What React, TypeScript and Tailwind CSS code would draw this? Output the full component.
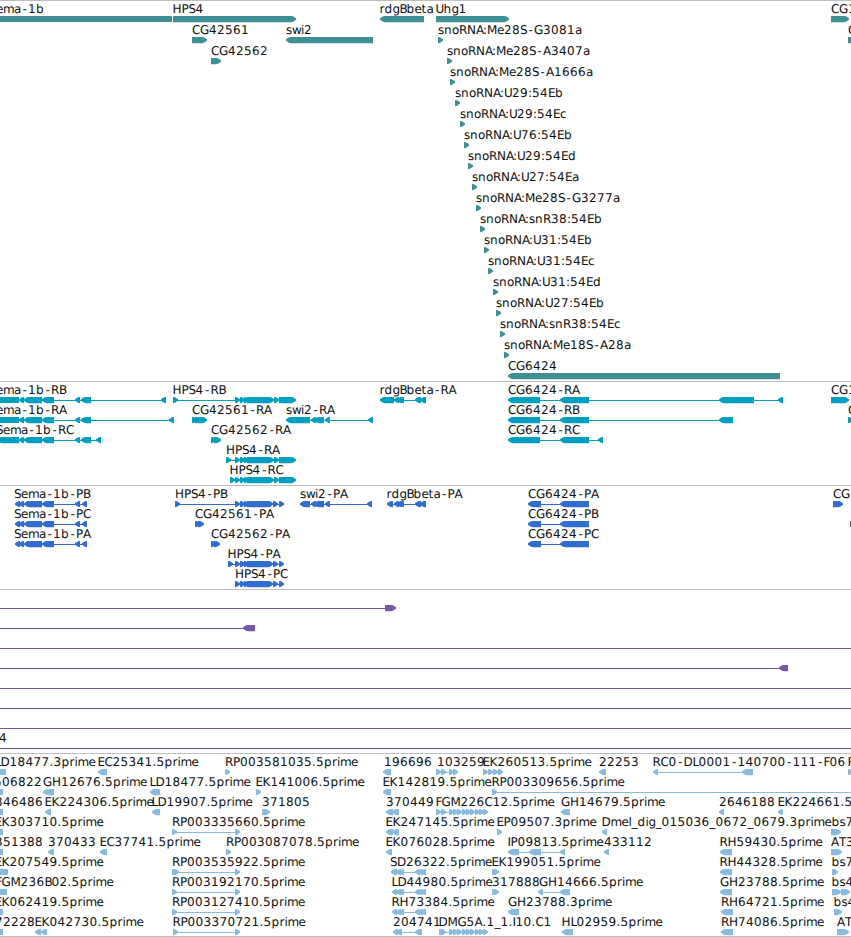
type Dir = "L" | "R" | "B";
/** start, end, direction (B is a plain block) */
type Seg = [number, number, Dir];
type Label = [number, string];
type Lane = { labels?: Label[]; segs?: Seg[]; lines?: [number, number][] };

const WIDTH = 851;

/** Advance of each character in a label, in pixels. */
const ADVANCE: Record<string, number> = {
  ".": 4, ":": 4, "-": 7, _: 6,
  A: 8, B: 7, C: 8, D: 9, E: 7, F: 6, G: 9, H: 9, I: 3, K: 8, L: 6, M: 10, N: 9, P: 7, R: 8, S: 7, T: 7, U: 8,
  a: 7, b: 8, c: 6, d: 8, e: 7, g: 7, h: 8, i: 3, l: 3, m: 11, n: 8, o: 7, p: 8, r: 5, s: 6, t: 5, w: 9,
};

function glyphPositions(x: number, text: string): string {
  let at = x;
  const out: number[] = [];
  let previous = "";
  for (const ch of text) {
    // the colon tucks in under an A, and hyphens are centred in their cell
    if (ch === ":" && previous === "A") at -= 1;
    out.push(ch === "-" ? at + 1.5 : at);
    at += ADVANCE[ch] ?? 8;
    previous = ch;
  }
  return out.join(" ");
}

const STEMS = "BDEFHIKLMNPRUbr";

function points([a, b, dir]: Seg): string {
  const t = Math.min(5, b - a);
  if (dir === "R") return `${a},14 ${b - t},14 ${b - t + 2},14.3 ${b},16.3 ${b},17.7 ${b - t + 2},19.8 ${b - t},20.3 ${a},20.3`;
  if (dir === "L") return `${b},14 ${a + t},14 ${a + t - 2},14.3 ${a},16.3 ${a},17.7 ${a + t - 2},19.8 ${a + t},20.3 ${b},20.3`;
  return `${a},14 ${b},14 ${b},20 ${a},20`;
}

function LaneRow({ lane, height }: { lane: Lane; height: number }) {
  return (
    <svg width={WIDTH} height={height} className="block shrink-0 overflow-visible">
      {lane.lines?.map(([a, b], i) => (
        <rect key={i} x={a} y={17} width={b - a} height={1} fill="currentColor" />
      ))}
      {lane.segs?.map((s, i) => (
        <polygon key={i} points={points(s)} fill="currentColor" />
      ))}
      {lane.labels?.map(([x, text], i) => (
        <text
          key={i}
          x={glyphPositions(x - (STEMS.includes(text[0]) ? 0.5 : 0), text)}
          y={11}
          className="fill-[#111111] font-['DejaVu_Sans',sans-serif] text-[12px] [text-rendering:geometricPrecision]"
        >
          {text}
        </text>
      ))}
    </svg>
  );
}

const SNO: [number, string][] = [
  [447, "Me28S-A3407a"], [450, "Me28S-A1666a"], [455, "U29:54Eb"], [460, "U29:54Ec"], [464, "U76:54Eb"],
  [468, "U29:54Ed"], [472, "U27:54Ea"], [476, "Me28S-G3277a"], [480, "snR38:54Eb"], [484, "U31:54Eb"],
  [488, "U31:54Ec"], [493, "U31:54Ed"], [496, "U27:54Eb"], [500, "snR38:54Ec"], [504, "Me18S-A28a"],
];

const snoLanes: Lane[] = SNO.map(([x, name]) => ({
  labels: [[x, "snoRNA:" + name]],
  segs: [[x, x + 5, "R"]],
}));
snoLanes[0].labels!.push([211, "CG42562"]);
snoLanes[0].segs!.push([211, 221, "R"]);

const genes: Lane[] = [
  {
    labels: [[-11, "Sema-1b"], [173, "HPS4"], [380, "rdgBbeta"], [436, "Uhg1"], [831, "CG1"]],
    segs: [[-10, 172, "B"], [173, 296, "R"], [380, 424, "L"], [436, 509, "R"], [831, 849, "R"]],
  },
  {
    labels: [[192, "CG42561"], [286, "swi2"], [438, "snoRNA:Me28S-G3081a"], [848, "C"]],
    segs: [[192, 207, "R"], [286, 373, "L"], [438, 443, "R"], [848, 860, "R"]],
  },
  ...snoLanes,
  { labels: [[508, "CG6424"]], segs: [[508, 780, "L"]] },
];

const semaExons: Seg[] = [[19, 24, "L"], [24, 42, "L"], [42, 54, "L"], [75, 80, "L"], [81, 91, "L"]];
const hpsExons: Seg[] = [
  [235, 240, "R"], [240, 245, "R"], [244, 249, "R"], [247, 274, "R"], [274, 279, "R"], [279, 296, "R"],
];
const rdgExons: Seg[] = [[394, 399, "L"], [397, 402, "L"], [399, 404, "L"], [415, 421, "L"], [420, 426, "L"]];
const swiExons: Seg[] = [[311, 316, "L"], [314, 324, "L"], [325, 330, "L"]];
const cgExons: Seg[] = [[508, 540, "L"], [560, 589, "L"]];

const transcripts: Lane[] = [
  {
    labels: [[-11, "Sema-1b-RB"], [173, "HPS4-RB"], [380, "rdgBbeta-RA"], [508, "CG6424-RA"], [831, "CG1"]],
    segs: [
      [-10, 19, "B"], ...semaExons, [161, 166, "L"], [173, 178, "R"], ...hpsExons, [380, 394, "L"], ...rdgExons,
      ...cgExons, [719, 754, "L"], [778, 783, "L"], [831, 849, "R"],
    ],
    lines: [[0, 164], [175, 290], [385, 424], [512, 781]],
  },
  {
    labels: [[-11, "Sema-1b-RA"], [192, "CG42561-RA"], [286, "swi2-RA"], [508, "CG6424-RB"], [848, "C"]],
    segs: [
      [-10, 19, "B"], ...semaExons, [169, 174, "L"], [192, 197, "R"], [195, 201, "R"], [198, 207, "R"],
      [286, 310, "L"], ...swiExons, [368, 373, "L"], ...cgExons, [719, 733, "L"], [848, 853, "R"],
    ],
    lines: [[0, 172], [290, 371], [512, 725]],
  },
  {
    labels: [[-4, "Sema-1b-RC"], [211, "CG42562-RA"], [508, "CG6424-RC"]],
    segs: [[-3, 19, "L"], ...semaExons, [96, 101, "L"], [211, 216, "R"], [214, 221, "R"], ...cgExons, [598, 603, "L"]],
    lines: [[0, 99], [512, 601]],
  },
  { labels: [[226.5, "HPS4-RA"]], segs: [[226, 231, "R"], ...hpsExons], lines: [[228, 290]] },
  { labels: [[230, "HPS4-RC"]], segs: [[230, 235, "R"], ...hpsExons], lines: [[232, 290]] },
];

const semaCds: Seg[] = [[15, 20, "L"], [19, 24, "L"], [24, 42, "L"], [42, 54, "L"], [75, 80, "L"], [82, 87, "L"]];
const hpsCds: Seg[] = [
  [235, 240, "R"], [240, 245, "R"], [244, 249, "R"], [247, 273, "R"], [273, 278, "R"], [279, 284, "R"],
];
const cgCds: Seg[] = [[528, 541, "L"], [560, 589, "L"]];

const proteins: Lane[] = [
  {
    labels: [
      [14, "Sema-1b-PB"], [175.5, "HPS4-PB"], [300, "swi2-PA"], [387, "rdgBbeta-PA"], [528, "CG6424-PA"], [833, "CG1"],
    ],
    segs: [
      ...semaCds, [175, 180, "R"], ...hpsCds, [300, 310, "L"], ...swiExons, [367, 372, "L"], [387, 393, "L"],
      ...rdgExons, ...cgCds, [833, 843, "R"],
    ],
    lines: [[18, 85], [177, 282], [303, 370], [390, 424], [532, 565]],
  },
  {
    labels: [[14, "Sema-1b-PC"], [195, "CG42561-PA"], [528, "CG6424-PB"]],
    segs: [...semaCds, [195, 200, "R"], [198, 204, "R"], ...cgCds, [850, 860, "B"]],
    lines: [[18, 85], [532, 565]],
  },
  {
    labels: [[14, "Sema-1b-PA"], [211, "CG42562-PA"], [528, "CG6424-PC"]],
    segs: [...semaCds, [211, 216, "R"], [214, 220, "R"], ...cgCds],
    lines: [[18, 85], [532, 565]],
  },
  { labels: [[228, "HPS4-PA"]], segs: [[228, 233, "R"], ...hpsCds], lines: [[230, 282]] },
  { labels: [[235.5, "HPS4-PC"]], segs: hpsCds, lines: [[237, 282]] },
];

const full: Lane = { lines: [[0, WIDTH]] };
const insertions: Lane[] = [
  { lines: [[0, 388]], segs: [[385, 396, "R"]] },
  { lines: [[0, 250]], segs: [[243, 255, "L"]] },
  full,
  { lines: [[0, 785]], segs: [[779, 788, "L"]] },
  full,
  full,
  full,
  { lines: [[0, WIDTH]], labels: [[-1, "4"]] },
];

const chain = (xs: number[], dir: Dir): Seg[] => xs.map((x) => [x, x + 5, dir]);
const uhgPair = chain([436, 441], "R");
const uhgRun = chain([449, 453, 457, 462, 466, 470, 475, 479, 483], "R");
const rpPair = chain([172, 235], "R");
const rpLine: [number, number] = [174, 237];
const rdgEst: Seg[] = [...chain([392, 396, 399], "L"), ...chain([415, 418, 421], "L")];
const rdgLine: [number, number] = [395, 424];

const ests: Lane[] = [
  {
    labels: [
      [-5, "LD18477.3prime"], [98, "EC25341.5prime"], [225.5, "RP003581035.5prime"], [384, "196696"], [437, "103259"],
      [483, "EK260513.5prime"], [599, "22253"], [653, "RC0-DL0001-140700-111-F06"], [848, "R"],
    ],
    segs: [
      [-5, 6, "B"], [98, 107, "L"], [225, 230, "R"], [383, 391, "L"], ...uhgPair, ...chain([449, 453], "R"),
      ...chain([483, 488, 493, 498], "R"), [599, 606, "L"], [653, 658, "L"], [742, 753, "L"], [848, 853, "R"],
    ],
    lines: [[438, 456], [485, 500], [655, 745]],
  },
  {
    labels: [
      [-6, "506822"], [43, "GH12676.5prime"], [150, "LD18477.5prime"], [256, "EK141006.5prime"],
      [383, "EK142819.5prime"], [492, "RP003309656.5prime"],
    ],
    segs: [[-5, 3, "B"], [43, 54, "L"], [150, 160, "L"], [256, 261, "R"], [383, 391, "L"], [492, 497, "R"]],
    lines: [[494, WIDTH]],
  },
  {
    labels: [
      [-5, "346486"], [45, "EK224306.5prime"], [152, "LD19907.5prime"], [262, "371805"], [386, "370449"],
      [436, "FGM226C12.5prime"], [561, "GH14679.5prime"], [719, "2646188"], [778, "EK224661.5prime"],
    ],
    segs: [
      [-5, 3, "B"], [45, 51, "L"], [152, 160, "L"], [262, 270, "R"], [386, 393, "L"], [392, 399, "L"], ...uhgPair,
      ...uhgRun, [561, 570, "L"], [719, 724, "L"], [778, 783, "L"],
    ],
    lines: [[438, 485]],
  },
  {
    labels: [
      [-5, "EK303710.5prime"], [172.5, "RP003335660.5prime"], [386, "EK247145.5prime"], [497, "EP09507.3prime"],
      [602, "Dmel_dig_015036_0672_0679.3prime"], [832, "bs7"],
    ],
    segs: [[-5, 3, "B"], ...rpPair, [386, 393, "L"], [392, 399, "L"], [497, 502, "R"], [602, 607, "L"], [831, 841, "R"]],
    lines: [rpLine],
  },
  {
    labels: [
      [-5, "351388"], [48, "370433"], [100, "EC37741.5prime"], [226.5, "RP003087078.5prime"], [386, "EK076028.5prime"],
      [508, "IP09813.5prime"], [604, "433112"], [720, "RH59430.5prime"], [831, "AT3"],
    ],
    segs: [
      [-5, 3, "B"], [48, 54, "L"], [100, 107, "L"], [226, 231, "R"], [386, 392, "L"], [508, 519, "L"],
      [529, 541, "L"], [560, 565, "L"], [604, 609, "L"], [720, 732, "L"], [831, 842, "R"],
    ],
    lines: [[512, 563]],
  },
  {
    labels: [
      [-5, "EK207549.5prime"], [172.5, "RP003535922.5prime"], [390, "SD26322.5prime"], [492, "EK199051.5prime"],
      [720, "RH44328.5prime"], [832, "bs7"],
    ],
    segs: [
      [-5, 8, "B"], ...rpPair, [174, 179, "R"], ...rdgEst, [391, 396, "L"], [492, 497, "R"], [494, 499, "R"],
      [720, 732, "L"], [832, 838, "R"],
    ],
    lines: [rpLine, rdgLine],
  },
  {
    labels: [
      [-4, "FGM236B02.5prime"], [172.5, "RP003192170.5prime"], [392, "LD44980.5prime"], [492, "317888"],
      [539, "GH14666.5prime"], [720, "GH23788.5prime"], [832, "bs4"],
    ],
    segs: [
      [-5, 7, "B"], ...rpPair, ...rdgEst, [492, 497, "R"], [494, 499, "R"], [538, 543, "L"], [560, 570, "L"],
      [720, 732, "L"], [832, 841, "R"], [841, 850, "R"],
    ],
    lines: [rpLine, rdgLine, [540, 565]],
  },
  {
    labels: [
      [-5, "EK062419.5prime"], [172.5, "RP003127410.5prime"], [392, "RH73384.5prime"], [508, "GH23788.3prime"],
      [721.5, "RH64721.5prime"], [834, "bs4"],
    ],
    segs: [[-5, 3, "B"], ...rpPair, ...rdgEst, [508, 519, "L"], [721, 733, "L"], [834, 842, "R"]],
    lines: [rpLine, rdgLine],
  },
  {
    labels: [
      [-5, "72228"], [35, "EK042730.5prime"], [173, "RP003370721.5prime"], [393, "204741"],
      [439, "DMG5A.1_1.I10.C1"], [562, "HL02959.5prime"], [721.5, "RH74086.5prime"], [837, "AT"],
    ],
    segs: [
      [-5, 3, "B"], [35, 41, "L"], [41, 47, "L"], ...chain([173, 235], "R"), [393, 398, "L"], [396, 402, "L"],
      [415, 422, "L"], [439, 446, "R"], ...uhgRun, [562, 573, "L"], [721, 733, "L"], [837, 849, "R"],
    ],
    lines: [[175, 237], [395, 420], [441, 485]],
  },
];

function Track({ lanes, className, pitch = 20 }: { lanes: Lane[]; className: string; pitch?: number }) {
  return (
    <section className={`flex flex-col border-t border-[#bebebe] pt-px ${className}`}>
      {lanes.map((lane, i) => (
        <LaneRow key={i} lane={lane} height={pitch} />
      ))}
    </section>
  );
}

export default function App() {
  return (
    <main className="flex h-[937px] w-[851px] flex-col overflow-hidden bg-white">
      <Track lanes={genes} pitch={21} className="pb-px text-[#3f8f95]" />
      <Track lanes={transcripts} className="pb-[2px] text-[#009fbf]" />
      <Track lanes={proteins} className="pb-[2px] text-[#316dcd]" />
      <Track lanes={insertions} className="pb-[2px] text-[#7558a6]" />
      <Track lanes={ests} className="border-b pb-px text-[#88bbdd]" />
    </main>
  );
}
